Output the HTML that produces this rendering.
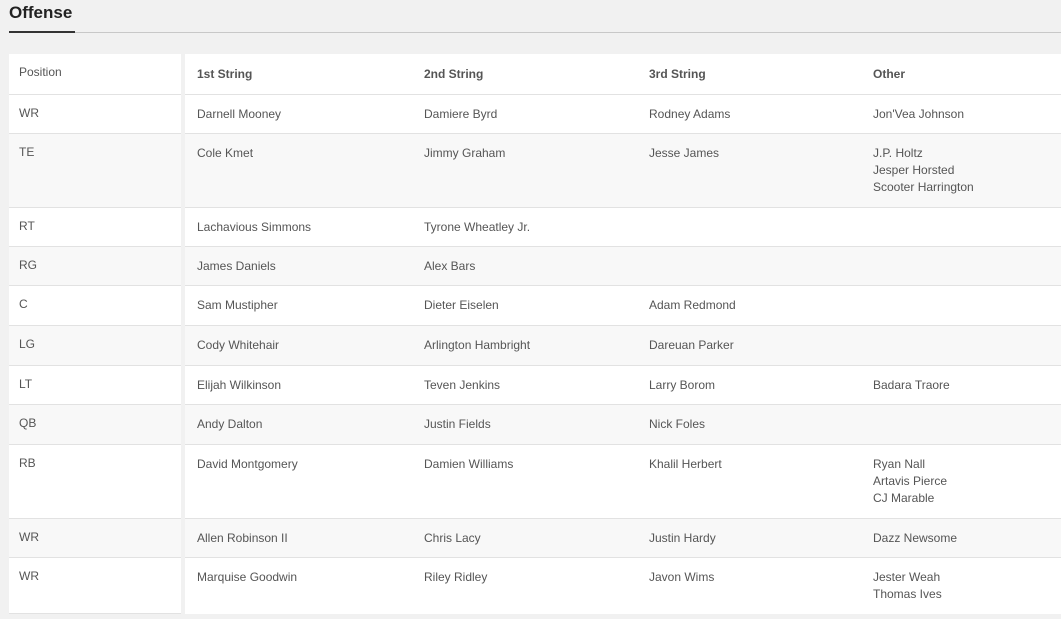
<!DOCTYPE html><html><head><style>
body{margin:0;background:#f1f1f1;font-family:"Liberation Sans",sans-serif;width:1061px;height:619px;overflow:hidden;position:relative}
h1{position:absolute;left:9px;top:2px;margin:0;font-size:17px;font-weight:bold;color:#222;line-height:22px}
.ul{position:absolute;left:9px;top:31px;width:66px;height:2px;background:#333}
.gl{position:absolute;left:75px;top:32px;right:0;height:1px;background:#c8c8c8}
.row{position:absolute;left:0;width:1061px;font-size:12px;color:#555;line-height:17px}
.c{position:absolute;top:0;bottom:0;border-bottom:1px solid #e2e2e2;box-sizing:border-box;padding-top:10px}
.p{left:9px;width:172px;padding-left:10px}
.r{left:185px;width:876px}
.r span{position:absolute;top:11px}
.a{left:12px}.b{left:239px}.d{left:464px}.e{left:688px}
.w .c{background:#fff}.g .c{background:#f8f8f8}
.h .r span{font-weight:bold;top:12px;color:#555}
</style></head><body>
<h1>Offense</h1><div class="ul"></div><div class="gl"></div>
<div class="row w h" style="top:54px;height:41px"><div class="c p">Position</div><div class="c r"><span class="a">1st String</span><span class="b">2nd String</span><span class="d">3rd String</span><span class="e">Other</span></div></div>
<div class="row w" style="top:95px;height:39px"><div class="c p">WR</div><div class="c r"><span class="a">Darnell Mooney</span><span class="b">Damiere Byrd</span><span class="d">Rodney Adams</span><span class="e">Jon'Vea Johnson</span></div></div>
<div class="row g" style="top:134px;height:74px"><div class="c p">TE</div><div class="c r"><span class="a">Cole Kmet</span><span class="b">Jimmy Graham</span><span class="d">Jesse James</span><span class="e">J.P. Holtz<br>Jesper Horsted<br>Scooter Harrington</span></div></div>
<div class="row w" style="top:208px;height:39px"><div class="c p">RT</div><div class="c r"><span class="a">Lachavious Simmons</span><span class="b">Tyrone Wheatley Jr.</span></div></div>
<div class="row g" style="top:247px;height:39px"><div class="c p">RG</div><div class="c r"><span class="a">James Daniels</span><span class="b">Alex Bars</span></div></div>
<div class="row w" style="top:286px;height:40px"><div class="c p">C</div><div class="c r"><span class="a">Sam Mustipher</span><span class="b">Dieter Eiselen</span><span class="d">Adam Redmond</span></div></div>
<div class="row g" style="top:326px;height:40px"><div class="c p">LG</div><div class="c r"><span class="a">Cody Whitehair</span><span class="b">Arlington Hambright</span><span class="d">Dareuan Parker</span></div></div>
<div class="row w" style="top:366px;height:39px"><div class="c p">LT</div><div class="c r"><span class="a">Elijah Wilkinson</span><span class="b">Teven Jenkins</span><span class="d">Larry Borom</span><span class="e">Badara Traore</span></div></div>
<div class="row g" style="top:405px;height:40px"><div class="c p">QB</div><div class="c r"><span class="a">Andy Dalton</span><span class="b">Justin Fields</span><span class="d">Nick Foles</span></div></div>
<div class="row w" style="top:445px;height:74px"><div class="c p">RB</div><div class="c r"><span class="a">David Montgomery</span><span class="b">Damien Williams</span><span class="d">Khalil Herbert</span><span class="e">Ryan Nall<br>Artavis Pierce<br>CJ Marable</span></div></div>
<div class="row g" style="top:519px;height:39px"><div class="c p">WR</div><div class="c r"><span class="a">Allen Robinson II</span><span class="b">Chris Lacy</span><span class="d">Justin Hardy</span><span class="e">Dazz Newsome</span></div></div>
<div class="row w" style="top:558px;height:56px"><div class="c p">WR</div><div class="c r" style="border-bottom:none"><span class="a">Marquise Goodwin</span><span class="b">Riley Ridley</span><span class="d">Javon Wims</span><span class="e">Jester Weah<br>Thomas Ives</span></div></div>
</body></html>
